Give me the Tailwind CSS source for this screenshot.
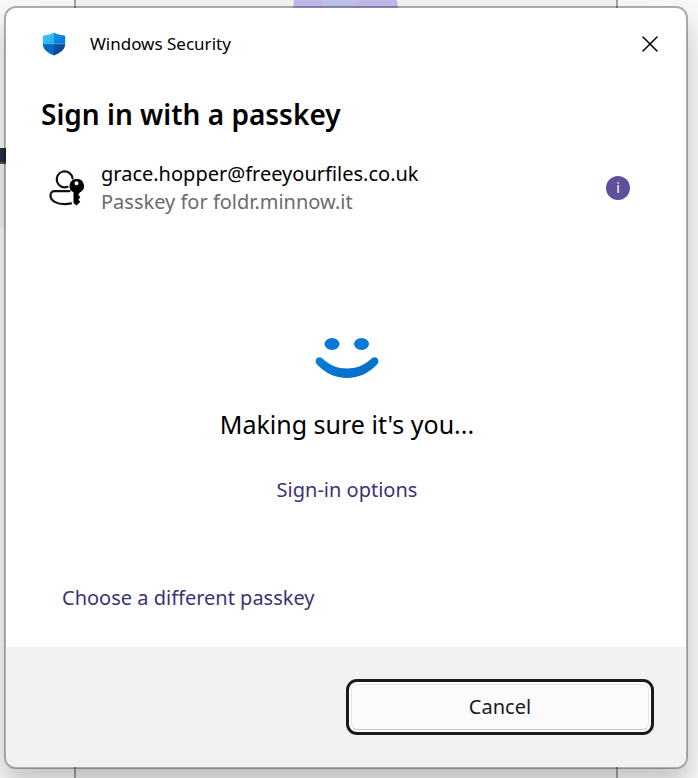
<!DOCTYPE html>
<html lang="en">
    <head>
        <meta charset="UTF-8" />
        <meta name="viewport" content="width=device-width, initial-scale=1.0" />
        <title>Windows Security</title>
        <script src="https://cdn.jsdelivr.net/npm/@tailwindcss/browser@4"></script>
    </head>
    <body class="relative min-h-screen overflow-hidden bg-[#f9f9f9] font-['Noto_Sans',sans-serif] text-black">
        <!-- page behind the dialog -->
        <div class="absolute inset-0 flex" aria-hidden="true">
            <div class="w-[74px] pt-[148px]">
                <div class="h-4 w-full border-b-2 border-[#555] bg-[#1f3345]"></div>
                <div class="h-16 w-full bg-[#f0f0f0]"></div>
            </div>
            <div class="flex flex-1 justify-center border-x-2 border-[#a3a3a3] bg-[#f3f3f3]">
                <svg width="106" height="8" viewBox="0 0 106 8">
                    <path fill="#c4b8ec" d="M1 0h103l1 8H0z" />
                    <path fill="#bdc4ec" d="M30 0h38l-8 8H30z" />
                </svg>
            </div>
            <div class="w-20"></div>
        </div>

        <main class="relative flex min-h-screen pt-1.5 pr-2.5 pb-[9px] pl-1">
            <div
                role="dialog"
                aria-labelledby="title"
                class="flex flex-1 flex-col overflow-hidden rounded-xl border-2 border-black/30 bg-white bg-clip-padding shadow-[0_16px_28px_rgba(0,0,0,0.22)]"
            >
                <header class="flex items-center pt-4 pr-4 pl-9">
                    <svg width="24" height="24" viewBox="0 0 24 24" aria-hidden="true">
                        <defs>
                            <linearGradient id="shieldTop" x1="0" y1="0" x2="1" y2="1">
                                <stop offset="0" stop-color="#3ccbf4" />
                                <stop offset="1" stop-color="#21aef0" />
                            </linearGradient>
                            <linearGradient id="shieldRight" x1="0" y1="0" x2="1" y2="1">
                                <stop offset="0" stop-color="#1593e4" />
                                <stop offset="1" stop-color="#0078d4" />
                            </linearGradient>
                            <linearGradient id="shieldBottom" x1="0" y1="0" x2="1" y2="1">
                                <stop offset="0" stop-color="#0f55a8" />
                                <stop offset="1" stop-color="#103f86" />
                            </linearGradient>
                        </defs>
                        <path fill="url(#shieldTop)" d="M12 .5v11.600H.8V4c0-.4.3-.6.7-.6C6 3.300 9.200 2.300 11.200.8z" />
                        <path fill="url(#shieldRight)" d="M12 .5v11.600h11.200V4c0-.4-.3-.6-.7-.6C18 3.300 14.800 2.300 12.800.8z" />
                        <path fill="#0669c4" d="M.8 11.900H12v11.600C6 21 .8 17.500.8 11.900z" />
                        <path fill="url(#shieldBottom)" d="M12 11.900h11.200c0 5.600-5.200 9.100-11.200 11.600z" />
                        <path fill="#4aa8ec" d="M.8 11.500h22.400v.7H.8z" />
                    </svg>
                    <span class="ml-6 flex-1 text-[17px] leading-10">Windows Security</span>
                    <button type="button" aria-label="Close" class="flex size-10 items-center justify-center">
                        <svg width="16" height="16" viewBox="0 0 16 16" fill="none" stroke="#000" stroke-width="1.5" stroke-linecap="round">
                            <path d="M1 1l14 14M15 1L1 15" />
                        </svg>
                    </button>
                </header>

                <div class="flex flex-1 flex-col pr-14 pl-[35px]">
                    <h1 id="title" class="mt-[30px] text-[28px] leading-10 font-semibold">Sign in with a passkey</h1>

                    <div class="mt-[26px] flex items-center pl-2">
                        <svg width="36" height="40" viewBox="0 0 36 40" fill="none" aria-hidden="true">
                            <g stroke="#111" stroke-width="2.2" stroke-linecap="round">
                                <path d="M18.500 18.800A8 8 0 1 1 23.600 10.300" />
                                <path d="M20.500 23.200H5.500A4 4 0 0 0 1.500 27.200C1.500 33 8 36.200 15.500 36.200c2.500 0 4.500-.3 6.500-.8" />
                            </g>
                            <path
                                fill="#000"
                                fill-rule="evenodd"
                                d="M27.500 11a7 7 0 0 0-3 13.300V35l3 2.500 3.800-3.800-2-2 2-2.600-2-2.400 1.700-2.400A7 7 0 0 0 27.500 11zm0 2.300a2 2 0 1 1 0 4 2 2 0 0 1 0-4z"
                            />
                        </svg>
                        <div class="ml-4 flex-1 text-[20px] leading-7">
                            <p>grace.hopper@freeyourfiles.co.uk</p>
                            <p class="text-[#6b6b6b]">Passkey for foldr.minnow.it</p>
                        </div>
                        <button type="button" aria-label="Passkey details" class="size-6 rounded-full bg-[#615099] text-sm leading-6 text-white">i</button>
                    </div>

                    <div class="-mr-[23px] mt-[120px] flex flex-col items-center">
                        <svg width="64" height="44" viewBox="0 0 64 44" aria-hidden="true">
                            <defs>
                                <linearGradient id="smile" x1="0" y1="0" x2="1" y2="1">
                                    <stop offset="0" stop-color="#0a80dc" />
                                    <stop offset="1" stop-color="#006ac4" />
                                </linearGradient>
                            </defs>
                            <ellipse cx="17" cy="8" rx="7.5" ry="6" fill="#0878d6" />
                            <ellipse cx="46.500" cy="8" rx="7.5" ry="6" fill="#0878d6" />
                            <path
                                fill="url(#smile)"
                                d="M1.600 28C-1.500 23.500 3.500 19 7.500 22.500 15 29.500 23 32.500 32 32.500S49 29.500 56.500 22.500c4-3.500 9 1 5.900 5.500C54 37 43.500 42 32 42S10 37 1.600 28z"
                            />
                        </svg>
                        <p class="mt-6 text-[25px] leading-10">Making sure it's you...</p>
                        <a href="#" class="mt-8 text-[20px] leading-7 text-[#3f3175]">Sign-in options</a>
                    </div>

                    <a href="#" class="mt-20 ml-[21px] self-start text-[20px] leading-7 text-[#3f3175]">Choose a different passkey</a>
                </div>

                <footer class="flex justify-end bg-[#f2f2f2] px-8 py-8">
                    <button
                        type="button"
                        class="h-14 w-1/2 rounded-[11px] border-3 border-[#1a1a1a] bg-white p-[2px] text-[20px] text-[#1a1a1a]"
                    >
                        <span class="flex h-full items-center justify-center rounded-md border border-[#e3e3e3] border-b-[#c8c8c8] bg-[#fbfbfb]">Cancel</span>
                    </button>
                </footer>
            </div>
        </main>
    </body>
</html>
